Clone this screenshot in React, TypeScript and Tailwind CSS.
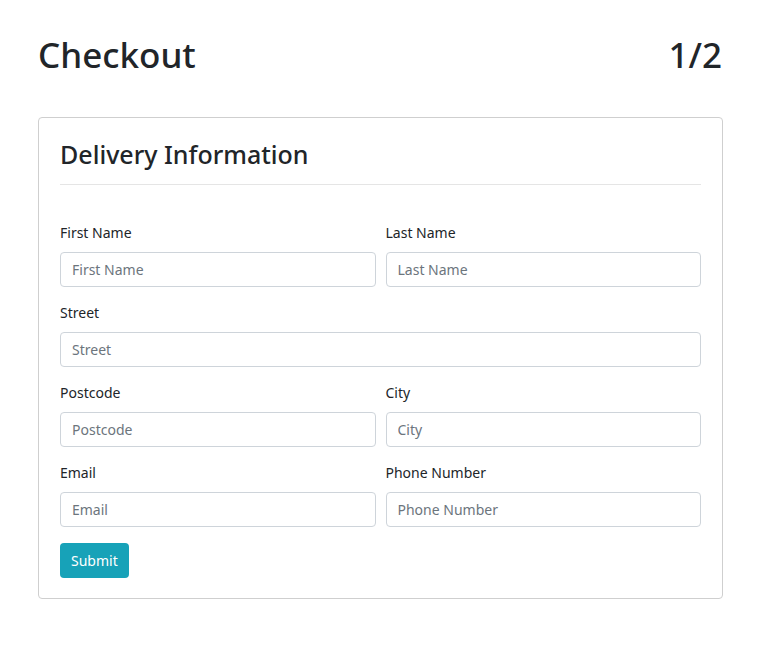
const fields: { label: string }[][] = [
  [{ label: 'First Name' }, { label: 'Last Name' }],
  [{ label: 'Street' }],
  [{ label: 'Postcode' }, { label: 'City' }],
  [{ label: 'Email' }, { label: 'Phone Number' }],
];

function Field({ label }: { label: string }) {
  return (
    <div className="flex flex-col flex-1 min-w-0">
      <label className="text-[14px] leading-[22px] text-[#212529] mb-[8px]">{label}</label>
      <input
        placeholder={label}
        className="h-[35px] w-full rounded-[4px] border border-[#ced4da] px-[11px] text-[14px] text-[#495057] placeholder:text-[#6c757d] outline-none"
      />
    </div>
  );
}

export default function App() {
  return (
    <div
      className="min-h-[654px] bg-white px-[38px] pt-[31px] text-[#212529]"
      style={{ fontFamily: '"Noto Sans", "Open Sans", sans-serif' }}
    >
      <div className="flex items-center justify-between w-[685px]">
        <h1 className="text-[35px] leading-[48px] font-medium">Checkout</h1>
        <span className="text-[35px] leading-[48px] font-medium mr-[1px]">1/2</span>
      </div>

      <div className="mt-[38px] w-[685px] rounded-[4px] border border-[#cfcfcf] px-[21px] pt-[21px] pb-[20px]">
        <h3 className="text-[25px] leading-[30px] font-medium">Delivery Information</h3>
        <hr className="mt-[15px] border-t border-[#e5e5e5]" />

        <form className="mt-[37px] flex flex-col gap-[15px]" onSubmit={(e) => e.preventDefault()}>
          {fields.map((row, i) => (
            <div key={i} className="flex gap-[10px]">
              {row.map((f) => (
                <Field key={f.label} label={f.label} />
              ))}
            </div>
          ))}
          <div className="mt-[1px]">
            <button
              type="submit"
              className="h-[35px] rounded-[4px] bg-[#17a2b8] px-[11px] text-[14px] text-white"
            >
              Submit
            </button>
          </div>
        </form>
      </div>
    </div>
  );
}
